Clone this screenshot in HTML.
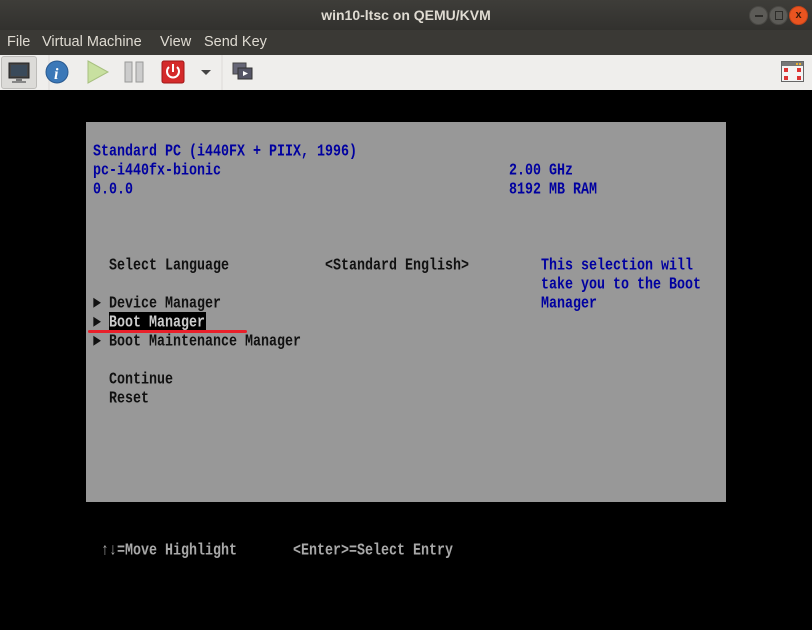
<!DOCTYPE html>
<html><head><meta charset="utf-8"><style>
*{margin:0;padding:0;box-sizing:border-box}
body{width:812px;height:630px;overflow:hidden;background:#000;font-family:"Liberation Sans",sans-serif;position:relative}
#title{position:absolute;left:0;top:0;width:812px;height:30px;background:linear-gradient(#3e3d39,#32312e);color:#dfdbd2;font-weight:bold;font-size:14px;text-align:center;line-height:30px}
#menu{position:absolute;left:0;top:30px;width:812px;height:25px;background:#3a3935;color:#dfdbd2;font-size:14.5px;line-height:25px}
#menu span{position:absolute;top:0}
#tb{position:absolute;left:0;top:55px;width:812px;height:35px;background:#efeeec}
.wb{position:absolute;top:6px;width:19px;height:19px;border-radius:50%;background:#5c5b57;border:1px solid #4a4945}
#vm{position:absolute;left:86px;top:122px;width:640px;height:380px;background:#989898}
.t{position:absolute;font-family:"Liberation Mono",monospace;font-size:13.33px;line-height:19px;white-space:pre;transform:scaleY(1.25);transform-origin:0 50%;font-weight:bold;letter-spacing:0}
.b{color:#0000a0}.k{color:#111}.g{color:#a8a8a8;font-weight:bold}
</style></head><body>
<div id="title">win10-ltsc on QEMU/KVM</div>
<div class="wb" style="left:749px"><div style="position:absolute;left:5px;top:8px;width:8px;height:2px;background:#2d2c29"></div></div>
<div class="wb" style="left:769px"><div style="position:absolute;left:5px;top:4px;width:8px;height:9px;border:1.5px solid #2d2c29"></div></div>
<div class="wb" style="left:789px;background:#e95420;border-color:#c4441a;color:#3a1a0a;font-size:11px;text-align:center;line-height:17px;font-weight:bold">x</div>
<div id="menu"><span style="left:7px">File</span><span style="left:42px">Virtual Machine</span><span style="left:160px">View</span><span style="left:204px">Send Key</span></div>
<div id="tb">
 <div style="position:absolute;left:1px;top:1px;width:36px;height:33px;background:#dcdbd8;border:1px solid #bdbcb9;border-radius:3px"></div>
 <svg style="position:absolute;left:0;top:0" width="260" height="35">
  <rect x="9" y="8" width="20" height="15" fill="#444" stroke="#222"/><rect x="11" y="10" width="16" height="11" fill="#3a4a5a"/><rect x="16" y="23" width="6" height="3" fill="#777"/><rect x="12" y="26" width="14" height="2" fill="#888"/>
  <line x1="49" y1="0" x2="49" y2="35" stroke="#dcdbd8"/>
  <circle cx="57" cy="17" r="11" fill="#3b78b8" stroke="#2a5a90"/><text x="54" y="24" font-family="Liberation Serif" font-style="italic" font-weight="bold" font-size="16" fill="#fff">i</text>
  <polygon points="88,6 108,17 88,28" fill="#c8e0a0" stroke="#a8c080"/>
  <rect x="125" y="7" width="7" height="20" fill="#ccc" stroke="#999"/><rect x="136" y="7" width="7" height="20" fill="#ccc" stroke="#999"/>
  <rect x="162" y="6" width="22" height="22" rx="2" fill="#d42a2a" stroke="#a01818"/><path d="M169 12 A6 6 0 1 0 177 12" stroke="#fff" stroke-width="2" fill="none"/><line x1="173" y1="9" x2="173" y2="17" stroke="#fff" stroke-width="2"/>
  <polygon points="201,15 211,15 206,20" fill="#444"/>
  <line x1="222" y1="0" x2="222" y2="35" stroke="#dcdbd8"/>
  <rect x="233" y="8" width="13" height="11" fill="#667" stroke="#444"/><rect x="238" y="13" width="14" height="11" fill="#556" stroke="#333"/><polygon points="243,16 248,18.5 243,21" fill="#fff"/>
 </svg>
 <svg style="position:absolute;left:781px;top:6px" width="24" height="22">
  <rect x="0.5" y="0.5" width="22" height="20" fill="#f4f4f4" stroke="#666"/><rect x="1" y="1" width="21" height="4" fill="#777"/>
  <rect x="15" y="2" width="2" height="2" fill="#e8b030"/><rect x="18" y="2" width="2" height="2" fill="#e8b030"/>
  <rect x="3" y="7" width="4" height="4" fill="#d33"/><rect x="16" y="7" width="4" height="4" fill="#d33"/><rect x="3" y="15" width="4" height="4" fill="#d33"/><rect x="16" y="15" width="4" height="4" fill="#d33"/>
 </svg>
</div>
<div id="vm"></div>
<div class="t b" style="left:93px;top:143px">Standard PC (i440FX + PIIX, 1996)</div>
<div class="t b" style="left:93px;top:162px">pc-i440fx-bionic</div>
<div class="t b" style="left:93px;top:181px">0.0.0</div>
<div class="t b" style="left:509px;top:162px">2.00 GHz</div>
<div class="t b" style="left:509px;top:181px">8192 MB RAM</div>
<div class="t k" style="left:109px;top:257px">Select Language</div>
<div class="t k" style="left:325px;top:257px">&lt;Standard English&gt;</div>
<div class="t b" style="left:541px;top:257px">This selection will</div>
<div class="t b" style="left:541px;top:276px">take you to the Boot</div>
<div class="t b" style="left:541px;top:295px">Manager</div>
<div class="t k" style="left:93px;top:295px">&#9658; Device Manager</div>
<div style="position:absolute;left:109px;top:312px;width:97px;height:19px;background:#000"></div>
<div class="t k" style="left:93px;top:314px">&#9658;</div>
<div class="t" style="left:109px;top:314px;color:#ccc">Boot Manager</div>
<div class="t k" style="left:93px;top:333px">&#9658; Boot Maintenance Manager</div>
<div style="position:absolute;left:88px;top:330px;width:159px;height:3px;background:#e8202a;border-radius:2px"></div>
<div class="t k" style="left:109px;top:371px">Continue</div>
<div class="t k" style="left:109px;top:390px">Reset</div>
<div class="t g" style="left:101px;top:542px">&#8593;&#8595;=Move Highlight</div>
<div class="t g" style="left:293px;top:542px">&lt;Enter&gt;=Select Entry</div>
</body></html>
